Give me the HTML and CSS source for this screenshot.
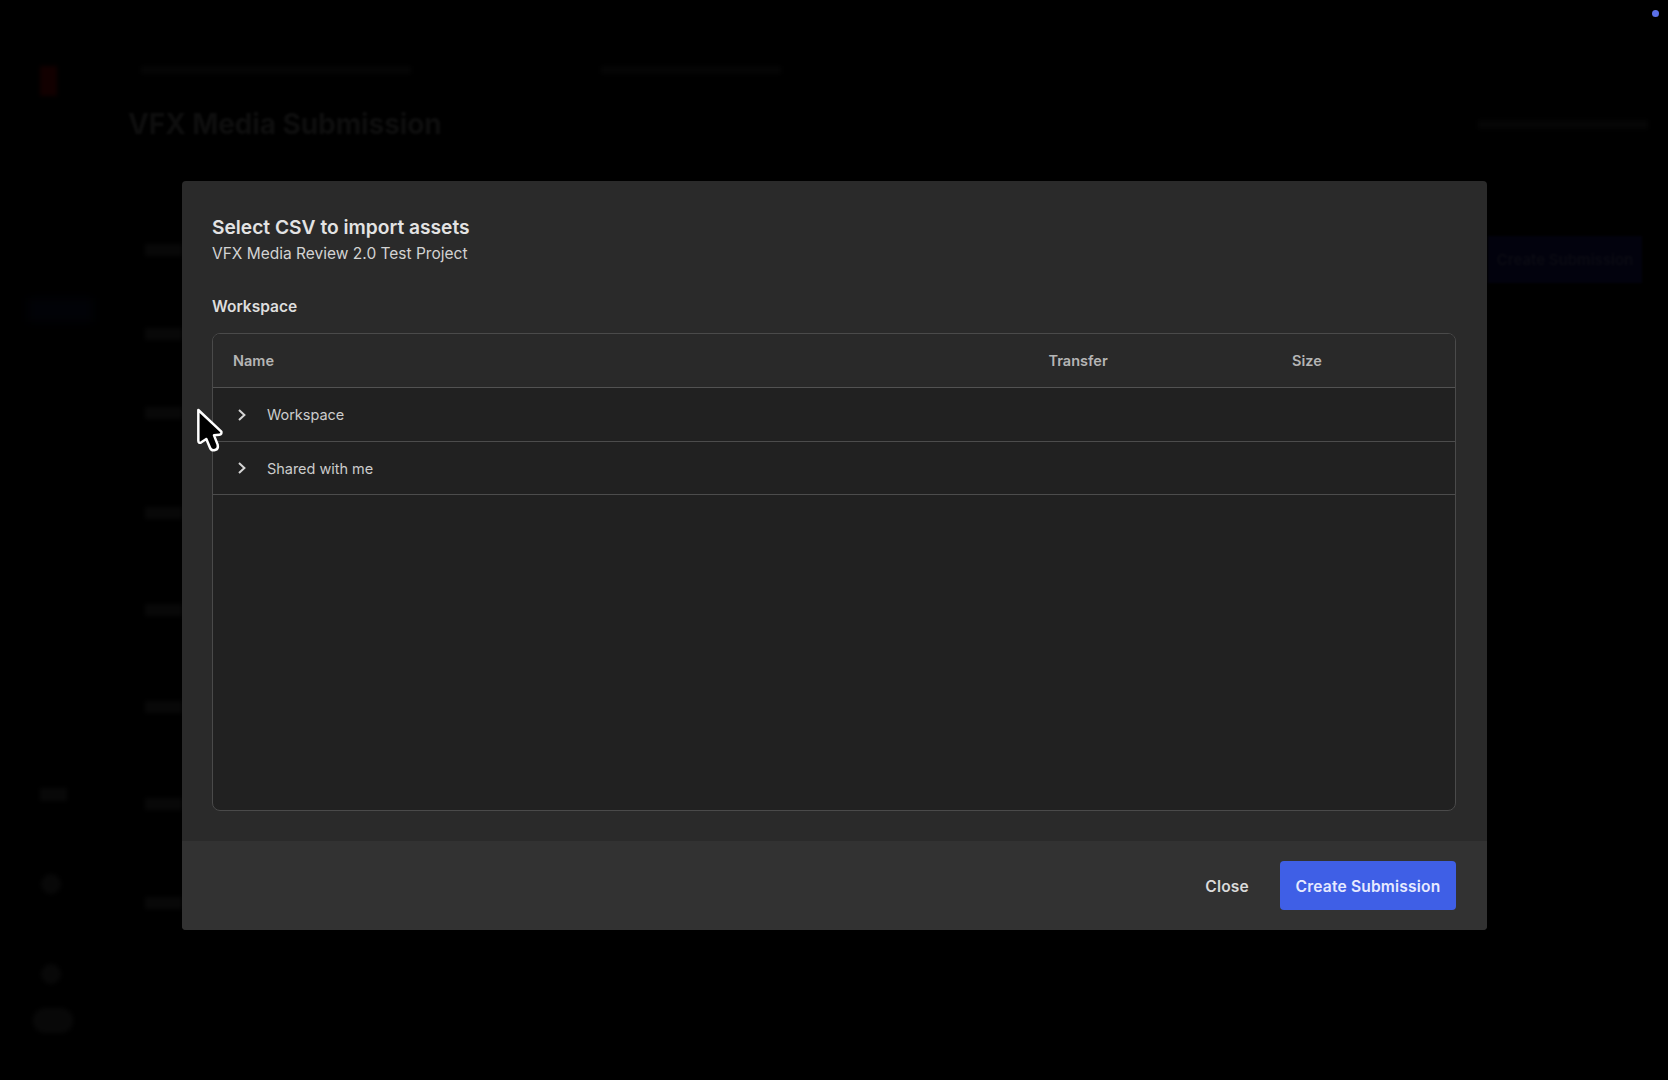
FILE: index.html
```
<!DOCTYPE html>
<html lang="en">
<head>
<meta charset="utf-8">
<title>VFX Media Submission</title>
<link rel="stylesheet" href="styles.css">
</head>
<body>
<div class="app">
  <nav class="rail">
    <i class="logo"></i>
    <i class="rail-active"></i>
    <i class="rail-item first"></i>
    <i class="rail-item round"></i>
    <i class="rail-item round"></i>
    <i class="rail-item wide"></i>
  </nav>
  <main class="page">
    <div class="crumbs"><i></i><i></i></div>
    <header class="page-head"><h1>VFX Media Submission</h1><i class="account"></i></header>
    <div class="page-body">
      <div class="list"><i></i><i></i><i></i><i></i><i></i><i></i><i></i><i></i></div>
      <div class="page-button">Create Submission</div>
    </div>
  </main>
</div>
<i class="record-dot"></i>
<div class="overlay">
  <section class="modal">
    <div class="content">
      <h2 class="title"><span>Select CSV to import assets</span></h2>
      <p class="subtitle"><span>VFX Media Review 2.0 Test Project</span></p>
      <h3 class="section"><span>Workspace</span></h3>
      <div class="table">
        <div class="thead"><span>Name</span><span class="transfer">Transfer</span><span class="size">Size</span></div>
        <div class="row"><svg class="chevron" viewBox="0 0 8 12"><path d="M1 1l5.4 5L1 11"/></svg><span>Workspace</span></div>
        <div class="row"><svg class="chevron" viewBox="0 0 8 12"><path d="M1 1l5.4 5L1 11"/></svg><span>Shared with me</span></div>
      </div>
    </div>
    <footer class="footer">
      <button class="close"><span>Close</span></button>
      <button class="create"><span>Create Submission</span></button>
    </footer>
  </section>
</div>
<svg class="cursor" viewBox="75 81 87 138"><path d="M82 90L151 155Q153 163 145 164L129 166L140 194Q143 207 132 210Q121 213 117 203L106 177L91 187Q82 191 82 182Z"/></svg>
</body>
</html>
```
FILE: styles.css
```
* { box-sizing: border-box; }
body { margin: 0; height: 1080px; overflow: hidden; background: #000; color: #dedede; font-family: Inter, sans-serif; position: relative; }
h1, h2, h3, p { margin: 0; }
i { display: block; }
span { white-space: nowrap; }

.app { display: flex; height: 1080px; }
.rail { width: 128px; padding: 66px 0 0 40px; }
.logo { width: 17px; height: 30px; background: #120000; filter: blur(2px); }
.rail-active { width: 65px; height: 24px; margin: 202px 0 0 -12px; background: #010207; filter: blur(5px); }
.rail-item { width: 22px; height: 16px; background: #080808; filter: blur(2px); }
.rail-item.first { width: 27px; height: 13px; margin-top: 466px; }
.rail-item.round { width: 20px; height: 20px; border-radius: 50%; margin: 73px 0 0 1px; }
.rail-item.round + .round { margin-top: 70px; }
.rail-item.wide { width: 40px; height: 25px; margin: 24px 0 0 -7px; border-radius: 12px; }
.page { flex: 1; padding-top: 66px; }
.crumbs { display: flex; gap: 190px; padding-left: 13px; }
.crumbs i { width: 270px; height: 8px; background: #050505; filter: blur(2px); }
.crumbs i + i { width: 180px; }
.page-head { display: flex; justify-content: space-between; align-items: center; height: 34px; margin-top: 33px; }
.page-head h1 { font-size: 28px; line-height: 34px; font-weight: 700; color: #0e0e0e; letter-spacing: -0.1px; filter: blur(1.2px); }
.account { width: 170px; height: 9px; margin-right: 20px; background: #060606; filter: blur(2px); }
.page-body { display: flex; justify-content: space-between; padding: 95px 26px 0 17px; }
.list { display: grid; grid-template-rows: 84px 79px 100px 97px 97px 97px 99px 12px; padding-top: 8px; }
.list i { width: 37px; height: 12px; background: #080808; filter: blur(2px); }
.page-button { width: 154px; height: 47px; background: #02020d; color: #0b0b13; font-size: 15px; font-weight: 600; line-height: 47px; text-align: center; filter: blur(1px); }

.record-dot { position: absolute; left: 1652px; top: 10px; width: 7px; height: 7px; border-radius: 50%; background: #5b70e8; }
.overlay { position: absolute; inset: 0; padding: 181px 181px 0 181.5px; }
.modal { width: 1305px; height: 749px; border-radius: 4px; overflow: hidden; background: #2a2a2a; display: flex; flex-direction: column; }
.content { flex: 1; padding: 31px 30.5px 0 30.5px; }
.title { font-size: 19.2px; line-height: 31px; font-weight: 600; color: #e3e3e3; }
.subtitle { font-size: 15.5px; line-height: 22px; color: #d3d3d3; }
.section { font-size: 15.5px; line-height: 24px; font-weight: 600; margin-top: 30px; }
.table { height: 478px; margin-top: 14px; border: 1px solid #4a4a4a; border-radius: 8px; overflow: hidden; background: #212121; }
.thead { display: flex; align-items: center; height: 54px; background: #292929; border-bottom: 1px solid #525252; padding-left: 20px; font-size: 14.5px; font-weight: 600; color: #b5b5b5; }
.thead span { width: 815.5px; }
.thead .transfer { width: 243.5px; }
.thead .size { width: auto; }
.row { display: flex; align-items: center; height: 54px; border-bottom: 1px solid #4c4c4c; padding-left: 25px; font-size: 14.5px; color: #cccccc; }
.row span { letter-spacing: -0.03px; }
.row + .row { height: 53px; }
.chevron { width: 8px; height: 12px; margin-right: 21px; fill: none; stroke: #d5d5d5; stroke-width: 2; }
.footer { height: 89px; background: #323232; display: flex; justify-content: flex-end; align-items: center; gap: 31px; padding-right: 30.5px; }
button { border: 0; padding: 1px 0 0; height: 49px; background: none; font: 600 15.6px Inter, sans-serif; letter-spacing: 0.17px; color: #dadada; }
.create { width: 176px; border-radius: 4px; background: #3f5fe6; color: #e6eaff; }
.cursor { position: absolute; left: 195.5px; top: 407px; width: 29px; height: 46px; fill: #000; stroke: #fff; stroke-width: 7.5; stroke-linejoin: round; }
```
